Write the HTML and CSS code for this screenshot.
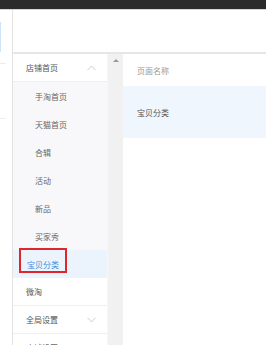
FILE: index.html
```html
<!DOCTYPE html>
<html lang="zh-CN">
<head>
    <meta charset="UTF-8">
    <title>页面管理</title>
    <link rel="stylesheet" href="styles.css">
</head>
<body>
    <div class="topbar"></div>
    <div class="main">
        <div class="rail">
            <span class="rail-mark"></span>
            <span class="rail-line first"></span>
            <span class="rail-line second"></span>
        </div>
        <div class="workspace">
            <div class="toolbar"></div>
            <div class="panes">
                <ul class="menu">
                    <li class="menu-item">店铺首页
                        <svg class="chev" width="9" height="6" viewBox="0 0 9 6"><path d="M0.5 5.2 L4.5 1 L8.5 5.2" fill="none" stroke="#c8c8c8" stroke-width="0.9"/></svg>
                    </li>
                    <li class="sub-item">手淘首页</li>
                    <li class="sub-item">天猫首页</li>
                    <li class="sub-item">合辑</li>
                    <li class="sub-item">活动</li>
                    <li class="sub-item">新品</li>
                    <li class="sub-item">买家秀</li>
                    <li class="menu-item active">宝贝分类<span class="mark"></span></li>
                    <li class="menu-item">微淘</li>
                    <li class="menu-item">全局设置
                        <svg class="chev" width="9" height="6" viewBox="0 0 9 6"><path d="M0.5 0.8 L4.5 5 L8.5 0.8" fill="none" stroke="#c8c8c8" stroke-width="0.9"/></svg>
                    </li>
                    <li class="menu-item">店铺设置
                        <svg class="chev" width="9" height="6" viewBox="0 0 9 6"><path d="M0.5 0.8 L4.5 5 L8.5 0.8" fill="none" stroke="#c8c8c8" stroke-width="0.9"/></svg>
                    </li>
                </ul>
                <div class="scroll"><span class="arrow"></span></div>
                <div class="table">
                    <div class="table-head">页面名称</div>
                    <div class="table-row selected">宝贝分类</div>
                </div>
            </div>
        </div>
    </div>
</body>
</html>
```

FILE: styles.css
```css
* { box-sizing: border-box; }
body { margin: 0; font-family: "Noto Sans CJK SC", "Noto Sans", sans-serif; font-size: 8px; color: #555; background: #fff; height: 345px; overflow: hidden; }
ul { list-style: none; margin: 0; padding: 0; }

.topbar { height: 10px; background: #2b2b2b; border-bottom: 1px solid #d6d6d6; }
.main { display: flex; height: 335px; }

.rail { position: relative; width: 13px; flex-shrink: 0; border-right: 1px solid #e2e2e2; }
.rail-mark { position: absolute; left: 0; top: 12px; width: 1px; height: 30px; background: #cfe4f7; }
.rail-line { position: absolute; left: 0; width: 6px; height: 1px; background: #ededed; }
.rail-line.first { top: 53px; }
.rail-line.second { top: 108px; }

.workspace { flex: 1; display: flex; flex-direction: column; min-width: 0; }
.toolbar { height: 44px; flex-shrink: 0; border-bottom: 2px solid #e6e6e6; }
.panes { flex: 1; display: flex; min-height: 0; overflow: hidden; }

.menu { width: 94px; flex-shrink: 0; }
.menu-item { position: relative; height: 28px; display: flex; align-items: center; justify-content: space-between; padding: 0 8px 0 13px; color: #555; border-bottom: 1px solid #efefef; background: #fff; }
.sub-item { height: 28px; display: flex; align-items: center; padding-left: 22px; color: #666; background: #f8f8fa; }
.menu-item.active { background: #ebf3fd; color: #3d8fe0; border-bottom: 0; padding-left: 14px; }
.mark { position: absolute; left: 6px; top: -2px; width: 48px; height: 25px; border: 2px solid #e0262b; }
.chev { margin-right: 3px; }

.scroll { position: relative; width: 16px; flex-shrink: 0; background: #f1f1f1; border-left: 1px solid #f7f7f7; }
.arrow { position: absolute; left: 5px; top: 5px; border-left: 3px solid transparent; border-right: 3px solid transparent; border-bottom: 3px solid #9a9a9a; }

.table { flex: 1; }
.table-head { height: 32px; display: flex; align-items: center; padding-left: 14px; color: #999; }
.table-row { height: 52px; display: flex; align-items: center; padding-left: 14px; color: #555; }
.table-row.selected { background: #eff6fe; }
```
